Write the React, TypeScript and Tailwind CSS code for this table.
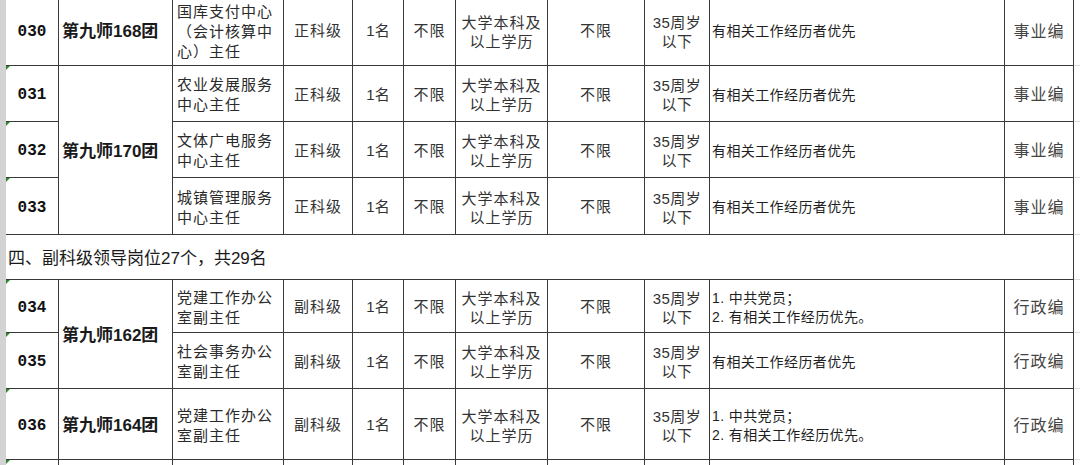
import React from 'react';

type Row = {
  no: string;
  unit?: string;
  unitSpan?: number;
  post: string[];
  level: string;
  req: string[];
  kind: string;
  h: string;
};

const rows: Row[] = [
  { no: '030', unit: '第九师168团', unitSpan: 1, post: ['国库支付中心', '（会计核算中', '心）主任'], level: '正科级', req: ['有相关工作经历者优先'], kind: '事业编', h: 'h-[71px]' },
  { no: '031', unit: '第九师170团', unitSpan: 3, post: ['农业发展服务', '中心主任'], level: '正科级', req: ['有相关工作经历者优先'], kind: '事业编', h: 'h-[56px]' },
  { no: '032', post: ['文体广电服务', '中心主任'], level: '正科级', req: ['有相关工作经历者优先'], kind: '事业编', h: 'h-[56px]' },
  { no: '033', post: ['城镇管理服务', '中心主任'], level: '正科级', req: ['有相关工作经历者优先'], kind: '事业编', h: 'h-[57px]' },
];

const rows2: Row[] = [
  { no: '034', unit: '第九师162团', unitSpan: 2, post: ['党建工作办公', '室副主任'], level: '副科级', req: ['1. 中共党员；', '2. 有相关工作经历优先。'], kind: '行政编', h: 'h-[53px]' },
  { no: '035', post: ['社会事务办公', '室副主任'], level: '副科级', req: ['有相关工作经历者优先'], kind: '行政编', h: 'h-[56px]' },
  { no: '036', unit: '第九师164团', unitSpan: 1, post: ['党建工作办公', '室副主任'], level: '副科级', req: ['1. 中共党员；', '2. 有相关工作经历优先。'], kind: '行政编', h: 'h-[71px]' },
];

// excel-ish grid line: every cell draws its own right + bottom edge
const line = 'border-r border-b border-[#3a3a3a] p-0 pt-[3px] align-middle';

function Flag() {
  return (
    <span className="absolute left-0 top-0 h-0 w-0 border-t-[4px] border-r-[4px] border-t-[#2f8a2f] border-r-transparent" />
  );
}

function Strip() {
  return <td className="bg-[#d3d3d3] p-0" />;
}

function Tail() {
  return <td className="border-b border-[#dcdcdc] p-0" />;
}

function Lines({ items }: { items: string[] }) {
  return (
    <>
      {items.map((t, i) => (
        <div key={i}>{t}</div>
      ))}
    </>
  );
}

function JobRow({ r }: { r: Row }) {
  return (
    <tr className={r.h}>
      <Strip />
      <td className={`${line} relative text-center font-['Liberation_Mono',monospace] text-[16px] font-bold text-[#111]`}>
        <Flag />
        {r.no}
      </td>
      {r.unit ? (
        <td
          rowSpan={r.unitSpan}
          className={`${line} pl-[3px] text-left text-[17px] font-bold text-[#1a1a1a]`}
        >
          {r.unit}
        </td>
      ) : null}
      <td className={`${line} pl-[4px] text-left text-[15px] leading-[20px] tracking-[1px] text-[#2a2a2a]`}>
        <Lines items={r.post} />
      </td>
      <td className={`${line} text-center text-[15px] tracking-[1px] text-[#333]`}>{r.level}</td>
      <td className={`${line} text-center text-[15px] text-[#333]`}>1名</td>
      <td className={`${line} text-center text-[15px] tracking-[1px] text-[#333]`}>不限</td>
      <td className={`${line} text-center text-[15px] leading-[19px] tracking-[1px] text-[#333]`}>
        <div>大学本科及</div>
        <div>以上学历</div>
      </td>
      <td className={`${line} text-center text-[15px] tracking-[1px] text-[#333]`}>不限</td>
      <td className={`${line} text-center text-[15px] leading-[19px] tracking-[0.5px] text-[#333]`}>
        <div>35周岁</div>
        <div>以下</div>
      </td>
      <td className={`${line} pl-[2px] text-left text-[14px] leading-[19px] tracking-[0.4px] text-[#1f1f1f]`}>
        <Lines items={r.req} />
      </td>
      <td className={`${line} text-center text-[16px] tracking-[1px] text-[#444]`}>{r.kind}</td>
      <Tail />
    </tr>
  );
}

export default function App() {
  const widths = [6, 53, 114, 111, 69, 51, 52, 92, 97, 65, 295, 69, 6];
  return (
    <div className="h-[465px] w-[1080px] overflow-hidden bg-white font-['Liberation_Sans','Noto_Sans_CJK_SC',sans-serif]">
      <table className="mt-[-5px] w-[1080px] table-fixed border-separate border-spacing-0">
        <colgroup>
          {widths.map((w, i) => (
            <col key={i} style={{ width: w }} />
          ))}
        </colgroup>
        <tbody>
          {rows.map((r) => (
            <JobRow key={r.no} r={r} />
          ))}
          <tr className="h-[45px]">
            <Strip />
            <td colSpan={11} className={`${line} pl-[2px] text-left text-[17px] text-[#1a1a1a]`}>
              四、副科级领导岗位27个，共29名
            </td>
            <Tail />
          </tr>
          {rows2.map((r) => (
            <JobRow key={r.no} r={r} />
          ))}
          <tr className="h-[20px]">
            <Strip />
            <td className={`${line} relative`}>
              <Flag />
            </td>
            {Array.from({ length: 10 }).map((_, i) => (
              <td key={i} className={line} />
            ))}
            <Tail />
          </tr>
        </tbody>
      </table>
    </div>
  );
}
